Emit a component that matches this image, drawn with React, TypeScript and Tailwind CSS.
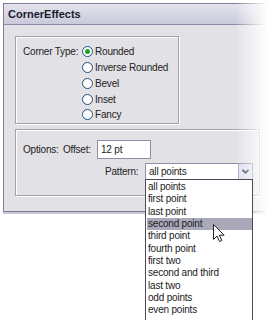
const cornerTypes = ["Rounded", "Inverse Rounded", "Bevel", "Inset", "Fancy"];

const patterns = [
  "all points",
  "first point",
  "last point",
  "second point",
  "third point",
  "fourth point",
  "first two",
  "second and third",
  "last two",
  "odd points",
  "even points",
];

function Radio({ checked }: { checked?: boolean }) {
  return (
    <span className="flex h-[11px] w-[11px] shrink-0 items-center justify-center rounded-full border border-[#1c5180] bg-white">
      {checked && <span className="h-[5px] w-[5px] rounded-full bg-[#21a121]" />}
    </span>
  );
}

function Cursor() {
  return (
    <svg width="13" height="19" viewBox="0 0 13 19" className="absolute left-[213px] top-[224px]">
      <path
        d="M0.5 0.5 L0.5 15.5 L4 12 L6.5 17.5 L8.8 16.5 L6.4 11.2 L11.2 11.2 Z"
        fill="#fff"
        stroke="#222"
        strokeWidth="1"
        strokeLinejoin="round"
      />
    </svg>
  );
}

export default function App() {
  return (
    <div className="relative h-[320px] w-[267px] overflow-hidden whitespace-nowrap bg-white font-['Liberation_Sans',Arial,sans-serif] text-[10px] tracking-[-0.2px] text-[#222]">
      <div className="ml-[3px] mt-[3px] w-[264px] border-l border-t border-b border-[#7d7d95] shadow-[0_2px_0_#c8c8d4]">
        <div className="flex h-[20px] items-center bg-gradient-to-b from-[#e4e4ee] to-[#c9c9dc] pl-[4px] text-[11px] font-bold tracking-[0px] text-[#1b1b2b]">
          CornerEffects
        </div>
        <div className="h-[1px] bg-[#8b8ba3]" />
        <div className="flex h-[186px] flex-col gap-[5px] bg-[#e2e1e6] pl-[11px] pt-[11px]">
          <div className="flex h-[88px] w-[164px] border border-[#a3a3ab] pl-[7px] pt-[7px] shadow-[inset_1px_1px_0_#fff,1px_1px_0_#fff]">
            <span className="h-[16px] w-[59px] leading-[16px]">Corner Type:</span>
            <div className="flex flex-col">
              {cornerTypes.map((t, i) => (
                <div key={t} className="flex h-[15.75px] items-center gap-[2px]">
                  <Radio checked={i === 0} />
                  <span>{t}</span>
                </div>
              ))}
            </div>
          </div>
          <div className="flex h-[67px] w-[245px] flex-col border border-[#a3a3ab] pl-[7px] pt-[10px] shadow-[inset_1px_1px_0_#fff,1px_1px_0_#fff]">
            <div className="flex h-[19px] items-center">
              <span className="w-[40px]">Options:</span>
              <span className="w-[34px]">Offset:</span>
              <div className="flex h-[19px] w-[54px] items-center border border-[#8e8ea8] bg-white pl-[3px]">
                12 pt
              </div>
            </div>
            <div className="mt-[4px] flex h-[17px] items-center pl-[82px]">
              <span className="w-[40px]">Pattern:</span>
              <div className="flex h-[17px] w-[108px] items-center justify-between border border-[#8e8ea8] bg-white pl-[3px]">
                <span>all points</span>
                <span className="flex h-[15px] w-[14px] items-center justify-center border-l border-[#a8b0c8] bg-[#dce0ee]">
                  <svg width="7" height="5" viewBox="0 0 7 5">
                    <path d="M0.5 0.8 L3.5 3.8 L6.5 0.8" fill="none" stroke="#2a2a3a" strokeWidth="1.6" />
                  </svg>
                </span>
              </div>
            </div>
          </div>
        </div>
      </div>
      <div className="pointer-events-none absolute right-0 top-0 h-[218px] w-[32px] bg-gradient-to-r from-transparent to-white" />
      <div className="absolute left-[145px] top-[179px] h-[150px] w-[108px] border border-[#4a4a5a] bg-white pt-[1px] pl-[1px]">
        {patterns.map((p, i) => (
          <div
            key={p}
            className={`flex h-[12.3px] items-center pl-[1px] leading-none ${i === 3 ? "bg-[#a9a9ba]" : ""}`}
          >
            {p}
          </div>
        ))}
      </div>
      <Cursor />
    </div>
  );
}
